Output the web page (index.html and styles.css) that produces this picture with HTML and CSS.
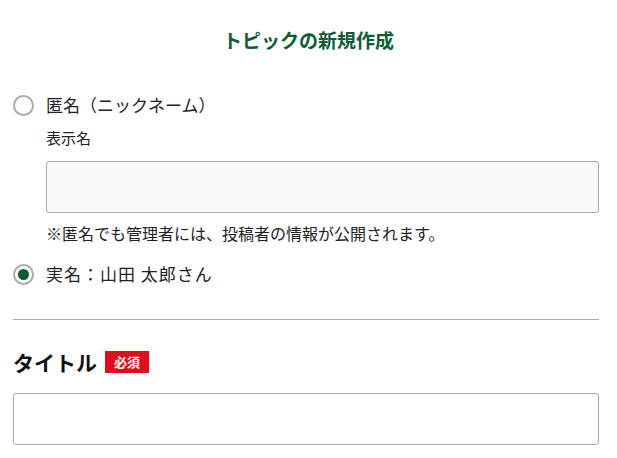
FILE: index.html
```html
<!DOCTYPE html>
<html lang="ja">
<head>
<meta charset="utf-8">
<link rel="stylesheet" href="styles.css">
</head>
<body>
<main class="page">
  <h1 class="page-title">トピックの新規作成</h1>

  <div class="choice">
    <label class="radio-row">
      <span class="radio"></span>
      <span class="radio-label">匿名（ニックネーム）</span>
    </label>
    <div class="choice-body">
      <div class="field-label">表示名</div>
      <div class="text-input filled"></div>
      <p class="note">※匿名でも管理者には、投稿者の情報が公開されます。</p>
    </div>
  </div>

  <div class="choice">
    <label class="radio-row">
      <span class="radio checked"></span>
      <span class="radio-label spaced">実名：山田 太郎さん</span>
    </label>
  </div>

  <hr class="divider">

  <div class="section-head">
    <h2 class="section-title">タイトル</h2>
    <span class="badge">必須</span>
  </div>
  <div class="text-input"></div>
</main>
</body>
</html>
```
FILE: styles.css
```css
* { box-sizing: border-box; }
html, body { margin: 0; padding: 0; background: #fff; }
body {
  font-family: "Noto Sans CJK JP", "Noto Sans", sans-serif;
  color: #222;
  text-spacing-trim: space-all;
}
.page {
  padding: 26px 18px 0 13px;
  display: flex;
  flex-direction: column;
}
.page-title {
  margin: 0 0 0 5px;
  text-align: center;
  font-size: 19px;
  line-height: 27px;
  font-weight: 700;
  color: #0b5e35;
}
.choice { display: flex; flex-direction: column; }
.radio-row {
  display: flex;
  align-items: center;
  gap: 12px;
  height: 28px;
}
.choice:first-of-type .radio-row { margin-top: 38px; }
.radio {
  width: 21px;
  height: 21px;
  border: 2px solid #aaa;
  border-radius: 50%;
  display: flex;
  align-items: center;
  justify-content: center;
  flex: none;
}
.radio.checked::after {
  content: "";
  width: 11px;
  height: 11px;
  border-radius: 50%;
  background: #0a5c34;
}
.radio-label {
  font-size: 17px;
  line-height: 24px;
  color: #222;
}
.radio-label.spaced { letter-spacing: 1px; }
.choice-body { padding-left: 33px; }
.field-label {
  margin-top: 8px;
  font-size: 15px;
  line-height: 22px;
}
.text-input {
  height: 52px;
  border: 1px solid #aaa;
  border-radius: 3px;
  background: #fff;
}
.text-input.filled {
  margin-top: 12px;
  background: #f9f9f9;
}
.note {
  margin: 9px 0 0;
  font-size: 16px;
  line-height: 22px;
  color: #222;
}
.choice + .choice .radio-row { margin-top: 16px; }
.divider {
  margin: 31px 0 0;
  border: 0;
  border-top: 1px solid #aaa;
  height: 0;
}
.section-head {
  margin-top: 29px;
  display: flex;
  align-items: center;
  gap: 8px;
  height: 26px;
}
.section-title {
  margin: 0;
  font-size: 21px;
  line-height: 26px;
  font-weight: 700;
  color: #111;
}
.badge {
  background: #e00c1a;
  color: #fff;
  font-size: 13px;
  font-weight: 700;
  line-height: 22px;
  height: 22px;
  padding: 0 9px;
}
.section-head + .text-input { margin-top: 18px; }
```
